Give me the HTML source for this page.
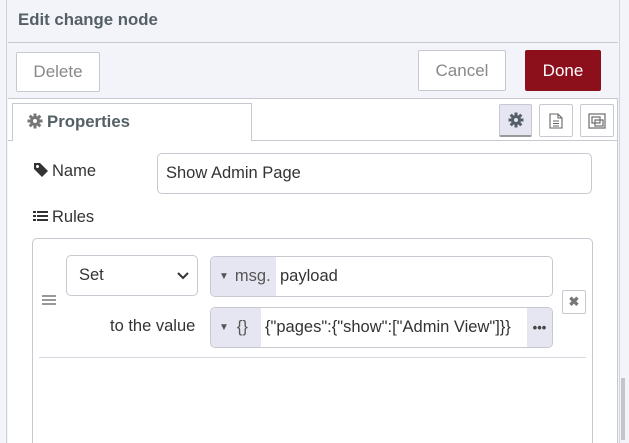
<!DOCTYPE html>
<html style="overflow:hidden;width:629px;height:443px"><head><meta charset="utf-8"><style>
*{box-sizing:border-box;margin:0;padding:0}
body{width:629px;height:443px;overflow:hidden;background:#f3f3fa;font-family:"Liberation Sans",sans-serif;font-size:16.5px;color:#333;position:relative}
.abs{position:absolute}
.btn{position:absolute;border:1px solid #c8c8d0;background:#fff;color:#888;font-size:17px;display:flex;align-items:center;justify-content:center;border-radius:2px}
.inp{position:absolute;border:1px solid #c8c8d0;border-radius:5px;background:#fff;display:flex;align-items:center;font-size:16.5px;color:#333}
</style></head><body>
<div class="abs" style="left:0;top:0;width:7px;height:443px;background:#f3f3fa;border-right:1px solid #d0d0d8"></div>
<div class="abs" style="left:8px;top:0;width:610px;height:443px;background:#fff;border-right:1px solid #c8c8d0"></div>
<div class="abs" style="left:619px;top:0;width:10px;height:443px;background:#f3f3fa;border-left:1px solid #d4d4dc"></div>
<div class="abs" style="left:621px;top:378px;width:4px;height:62px;background:#c4c4cc"></div>
<div class="abs" style="left:8px;top:0;width:610px;height:43px;background:#f3f3fa;border-bottom:1px solid #c8c8d0;font-weight:bold;color:#556066;font-size:16.8px;padding:10px 0 0 10px">Edit change node</div>
<div class="abs" style="left:8px;top:43px;width:610px;height:56px;background:#f3f3fa;border-bottom:1px solid #c8c8d0"></div>
<div class="btn" style="left:16px;top:52px;width:84px;height:40px">Delete</div>
<div class="btn" style="left:418px;top:50px;width:88px;height:41px">Cancel</div>
<div class="btn" style="left:525px;top:50px;width:76px;height:41px;background:#8c101c;border-color:#8c101c;color:#fff">Done</div>
<div class="abs" style="left:8px;top:140px;width:610px;height:1px;background:#c8c8d0"></div>
<div class="abs" style="left:12px;top:103px;width:240px;height:38px;background:#fff;border:1px solid #c8c8d0;border-bottom:none;font-weight:bold;color:#556066;font-size:16.8px;padding:8px 0 0 14px"><svg width="16" height="16" viewBox="0 0 16 16" style="vertical-align:-2px;margin-right:4px"><g fill="#777"><circle cx="8" cy="8" r="5"/><rect x="6.5" y="0.5" width="3" height="15"/><rect x="0.5" y="6.5" width="15" height="3"/><rect x="6.5" y="0.5" width="3" height="15" transform="rotate(45 8 8)"/><rect x="6.5" y="0.5" width="3" height="15" transform="rotate(-45 8 8)"/></g><circle cx="8" cy="8" r="2" fill="#fff"/></svg>Properties</div>
<div class="btn" style="left:499px;top:104px;width:33px;height:33px;background:#e6e6f2;border-bottom:2px solid #999"><svg width="16" height="16" viewBox="0 0 16 16"><g fill="#556066"><circle cx="8" cy="8" r="5"/><rect x="6.5" y="0.5" width="3" height="15"/><rect x="0.5" y="6.5" width="15" height="3"/><rect x="6.5" y="0.5" width="3" height="15" transform="rotate(45 8 8)"/><rect x="6.5" y="0.5" width="3" height="15" transform="rotate(-45 8 8)"/></g><circle cx="8" cy="8" r="2" fill="#e6e6f2"/></svg></div>
<div class="btn" style="left:539px;top:104px;width:34px;height:33px"><svg width="14" height="16" viewBox="0 0 14 16"><path d="M1 1h8l4 4v10H1z M9 1v4h4 M4 8h6 M4 10.5h6 M4 13h6" fill="none" stroke="#666" stroke-width="1.1"/></svg></div>
<div class="btn" style="left:580px;top:104px;width:34px;height:33px"><svg width="20" height="18" viewBox="0 0 20 18"><rect x="2" y="2" width="16" height="14" fill="none" stroke="#777" stroke-width="1.3"/><rect x="5" y="5" width="8" height="6" fill="none" stroke="#777" stroke-width="1.3"/><rect x="8" y="8" width="8" height="6" fill="none" stroke="#777" stroke-width="1.3"/></svg></div>
<div class="abs" style="left:33px;top:162px"><svg width="16" height="16" viewBox="0 0 16 16" style="vertical-align:-2px;margin-right:3px"><path d="M1 1h6l8 8-6 6-8-8z" fill="#333"/><circle cx="4.5" cy="4.5" r="1.5" fill="#fff"/></svg>Name</div>
<div class="inp" style="left:157px;top:153px;width:435px;height:41px;padding-left:8px">Show Admin Page</div>
<div class="abs" style="left:33px;top:208px"><svg width="15" height="13" viewBox="0 0 15 13" style="vertical-align:-1px;margin-right:4px"><path d="M0 1h3v2H0zM4 1h11v2H4zM0 5h3v2H0zM4 5h11v2H4zM0 9h3v2H0zM4 9h11v2H4z" fill="#333"/></svg>Rules</div>
<div class="abs" style="left:32px;top:238px;width:561px;height:215px;border:1px solid #c8c8d0;border-radius:5px"></div>
<div class="abs" style="left:42px;top:295px;width:14px;height:2px;background:#999;box-shadow:0 4px 0 #999,0 8px 0 #999"></div>
<div class="inp" style="left:66px;top:255px;width:132px;height:41px;padding-left:12px;justify-content:space-between;padding-right:8px">Set<svg width="12" height="8" viewBox="0 0 12 8"><path d="M1 1l5 5 5-5" fill="none" stroke="#333" stroke-width="2"/></svg></div>
<div class="inp" style="left:210px;top:256px;width:343px;height:41px;overflow:hidden"><div style="background:#e6e6f2;height:100%;width:65px;display:flex;align-items:center;padding-left:8px;color:#555"><span style="font-size:10px;margin-right:6px">▼</span>msg.</div><span style="padding-left:4px">payload</span></div>
<div class="abs" style="left:110px;top:317px">to the value</div>
<div class="inp" style="left:210px;top:307px;width:343px;height:41px;overflow:hidden"><div style="background:#e6e6f2;height:100%;width:50px;display:flex;align-items:center;padding-left:8px;color:#555"><span style="font-size:10px;margin-right:8px">▼</span>{}</div><span style="padding-left:4px;flex:1;white-space:nowrap">{"pages":{"show":["Admin View"]}}</span><div style="background:#e6e6f2;height:100%;width:25px;display:flex;align-items:center;justify-content:center;font-weight:bold;color:#444;font-size:13px">•••</div></div>
<div class="btn" style="left:562px;top:290px;width:24px;height:24px;color:#777;font-size:13px;font-weight:bold">✖</div>
<div class="abs" style="left:39px;top:357px;width:547px;height:1px;background:#d8d8e0"></div>
</body></html>
